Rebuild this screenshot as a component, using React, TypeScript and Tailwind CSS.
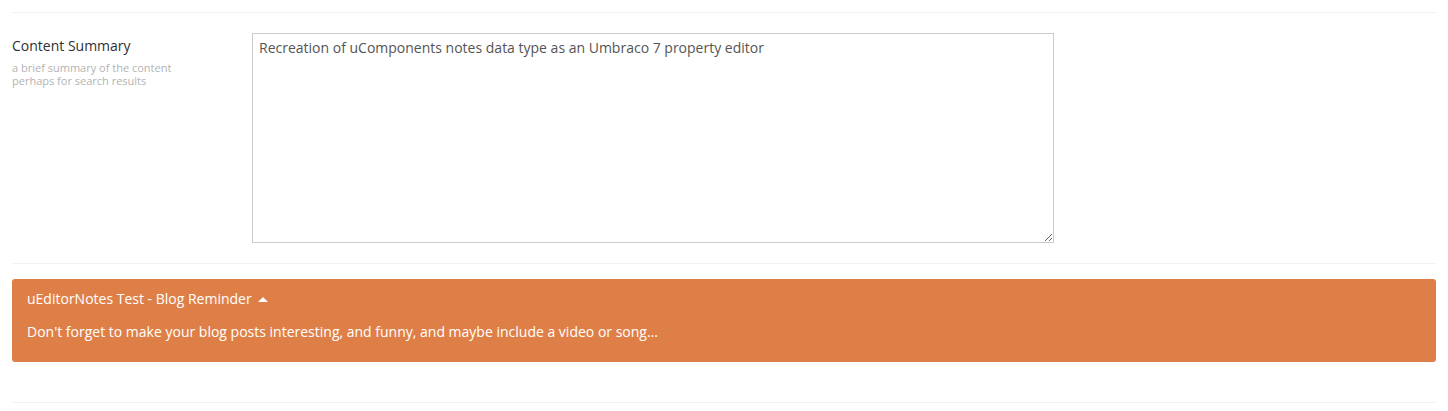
import React from "react";

const App: React.FC = () => {
  return (
    <div className="min-h-screen bg-white px-3 pt-3 font-['Open_Sans',sans-serif]">
      {/* Content summary property */}
      <div className="flex border-t border-[#f1f1f1] pt-5 pb-5">
        <div className="w-[240px] shrink-0 pt-[3px]">
          <div className="text-[14px] leading-5 text-[#303030]">Content Summary</div>
          <div className="mt-[5px] text-[11px] leading-[13px] text-[#b3b3b3]">
            a brief summary of the content
            <br />
            perhaps for search results
          </div>
        </div>
        <textarea
          className="h-[210px] w-[802px] border border-[#cccccc] px-[6px] py-1 text-[14px] leading-5 text-[#555555] outline-none"
          defaultValue="Recreation of uComponents notes data type as an Umbraco 7 property editor"
        />
      </div>

      {/* Editor note */}
      <div className="border-t border-[#f1f1f1] pt-[15px] pb-10">
        <div className="rounded-[3px] bg-[#df7f48] px-[15px] pt-[10px] pb-5 text-[14px] leading-5 text-white">
          <div className="flex items-center gap-[6px]">
            <span>uEditorNotes Test - Blog Reminder</span>
            <span className="inline-block h-0 w-0 border-x-[5px] border-b-[5px] border-x-transparent border-b-white" />
          </div>
          <div className="mt-[13px]">
            Don't forget to make your blog posts interesting, and funny, and maybe include a video or song...
          </div>
        </div>
      </div>
      <div className="border-t border-[#f1f1f1]" />
    </div>
  );
};

export default App;
